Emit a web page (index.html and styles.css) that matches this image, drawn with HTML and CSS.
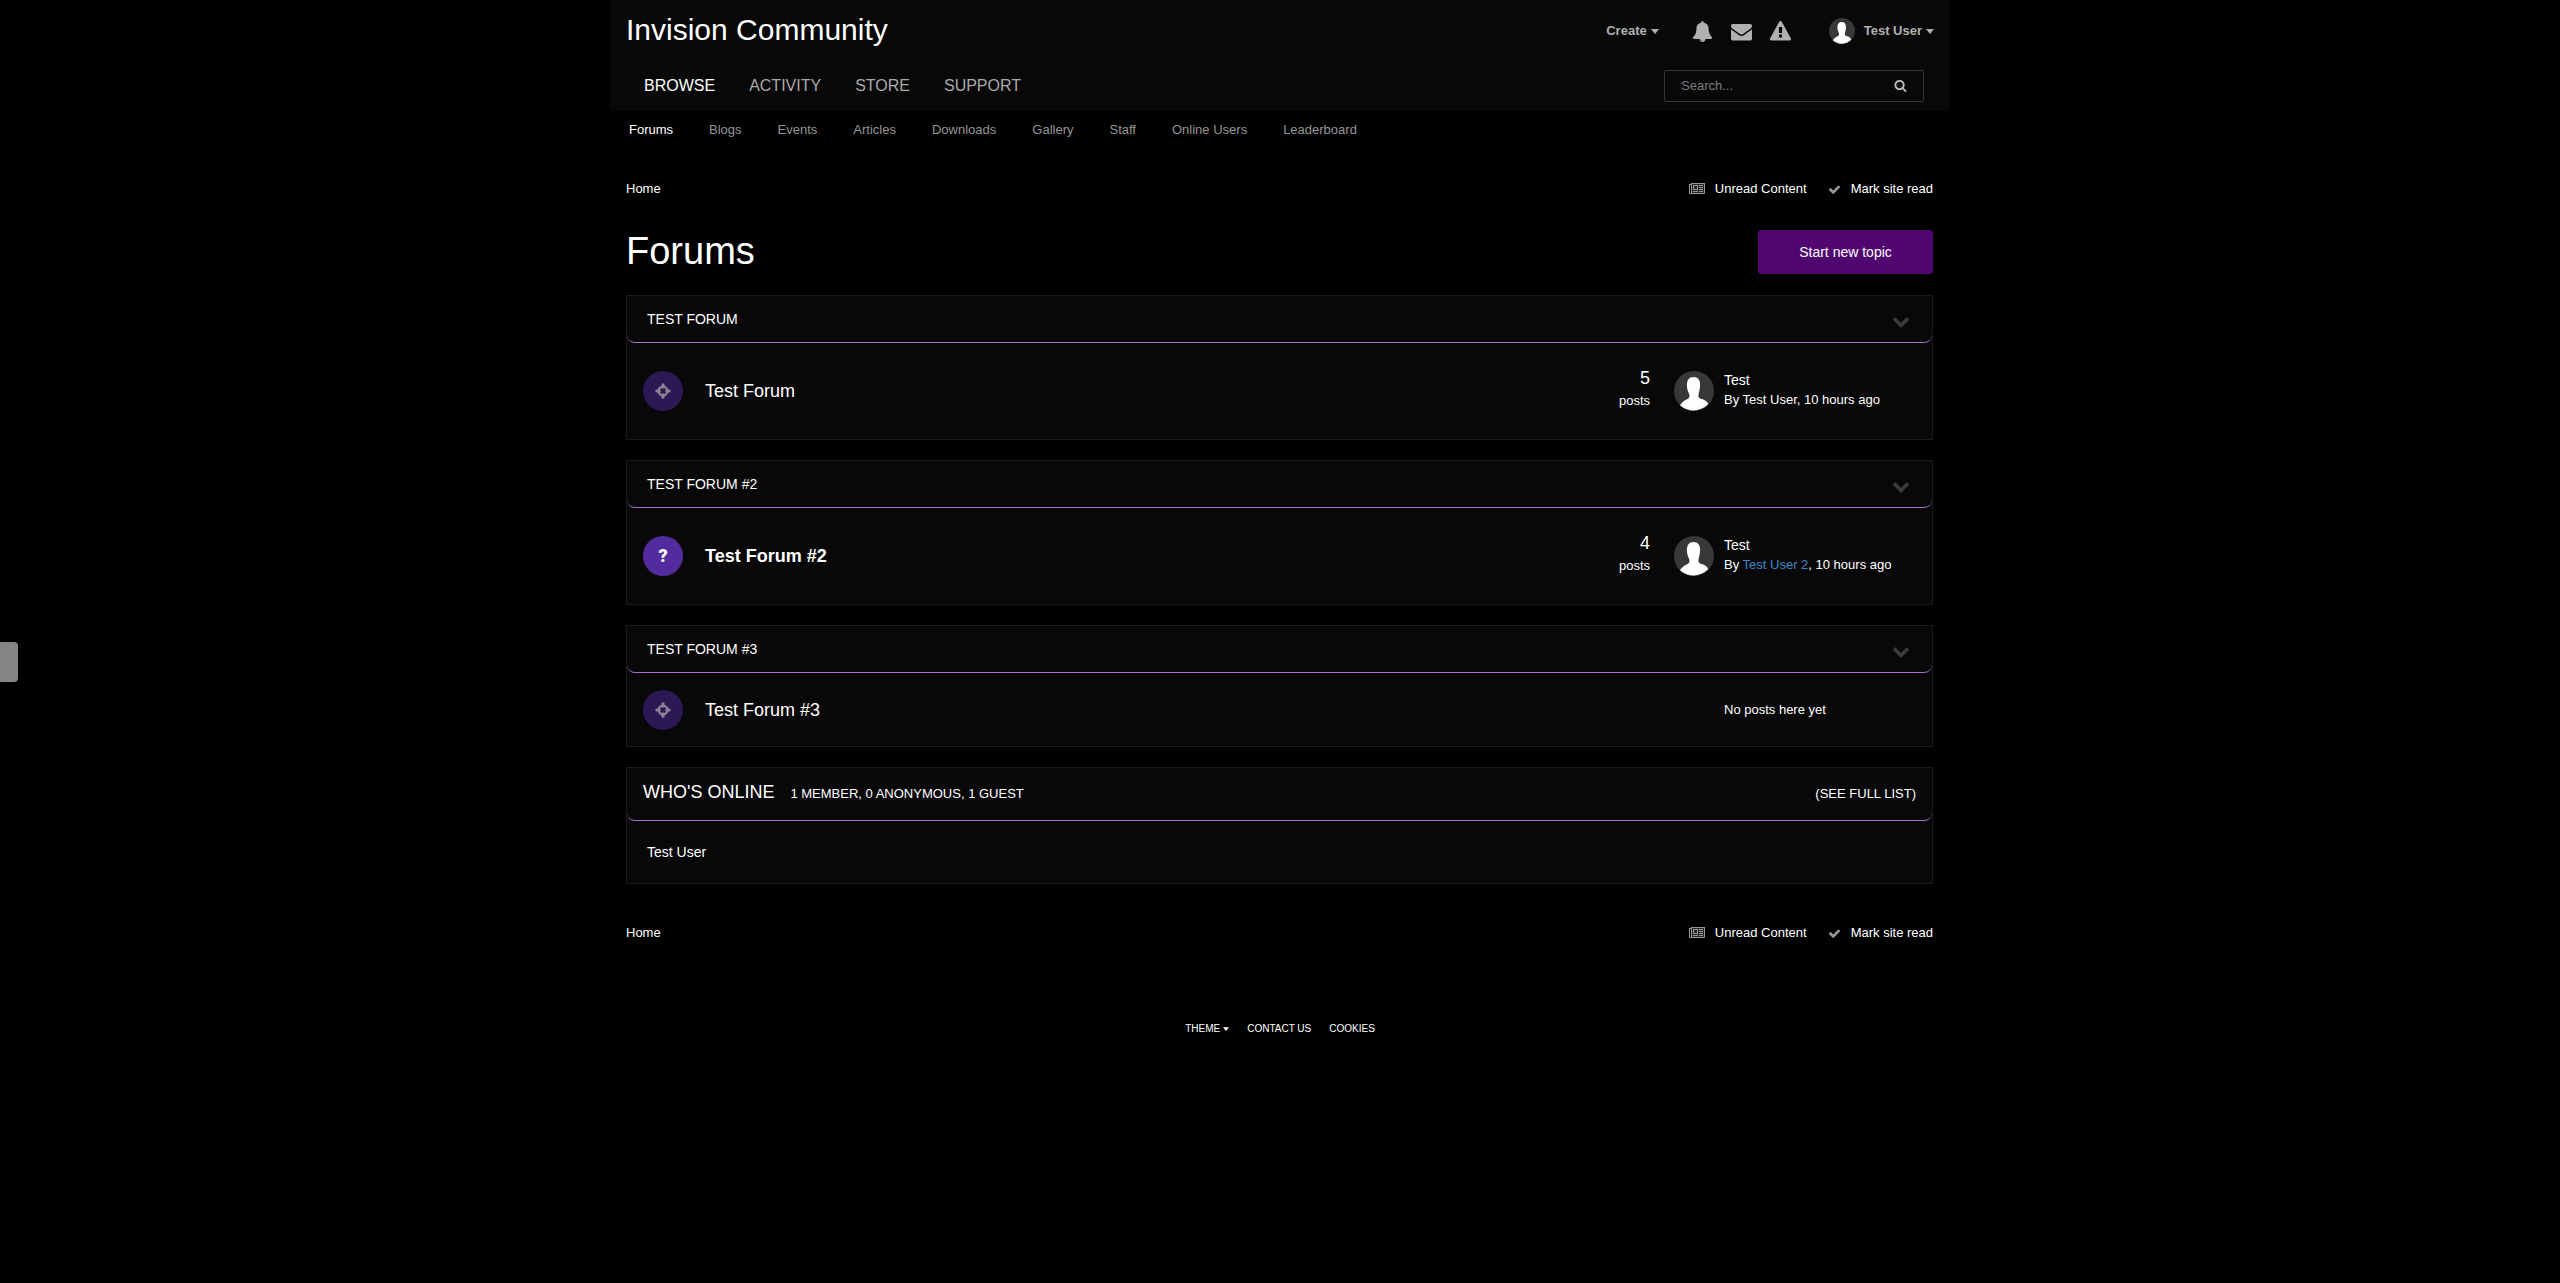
FILE: index.html
```html
<!DOCTYPE html>
<html lang="en">
<head>
    <meta charset="UTF-8">
    <meta name="viewport" content="width=device-width, initial-scale=1.0">
    <title>Forums - Invision Community</title>
    <link rel="stylesheet" href="styles.css">
</head>
<body>
    <!-- shared icons -->
    <svg class="sprite" aria-hidden="true">
        <symbol id="bell" viewBox="0 0 1792 1792"><path d="M912 1696q0-16-16-16-59 0-101.5-42.5t-42.5-101.5q0-16-16-16t-16 16q0 73 51.5 124.5t124.5 51.5q16 0 16-16zm816-288q0 52-38 90t-90 38h-448q0 106-75 181t-181 75-181-75-75-181h-448q-52 0-90-38t-38-90q50-42 91-88t85-119.5 74.5-158.5 50-206 19.5-260q0-152 117-282.5t307-158.5q-8-19-8-39 0-40 28-68t68-28 68 28 28 68q0 20-8 39 190 28 307 158.5t117 282.5q0 139 19.5 260t50 206 74.5 158.5 85 119.5 91 88z"/></symbol>
        <symbol id="envelope" viewBox="0 0 1792 1792"><path d="M1792 710v794q0 66-47 113t-113 47h-1472q-66 0-113-47t-47-113v-794q44 49 101 87 362 246 497 345 57 42 92.5 65.5t94.5 48 110 24.5h2q51 0 110-24.5t94.5-48 92.5-65.5q170-123 498-345 57-39 100-87zm0-294q0 79-49 151t-122 123q-376 261-468 325-10 7-42.5 31t-54 38.5-52 32.5-57.5 27-50 9h-2q-23 0-50-9t-57.5-27-52-32.5-54-38.5-42.5-31q-91-64-262-182.5t-205-142.5q-62-42-117-115.5t-55-136.5q0-78 41.5-130t118.5-52h1472q65 0 112.5 47t47.5 113z"/></symbol>
        <symbol id="warning" viewBox="0 0 1792 1792"><path d="M1024 1375v-190q0-14-9.5-23.5t-22.5-9.5h-192q-13 0-22.5 9.5t-9.5 23.5v190q0 14 9.5 23.5t22.5 9.5h192q13 0 22.5-9.5t9.5-23.5zm-2-374l18-459q0-12-10-19-13-11-24-11h-220q-11 0-24 11-10 7-10 21l17 457q0 10 10 16.5t24 6.5h185q14 0 23.5-6.5t10.5-16.5zm-14-934l768 1408q35 63-2 126-17 29-46.5 46t-63.5 17h-1536q-34 0-63.5-17t-46.5-46q-37-63-2-126l768-1408q17-31 47-49t65-18 65 18 47 49z"/></symbol>
        <symbol id="search" viewBox="0 0 1792 1792"><path d="M1216 832q0-185-131.5-316.5t-316.5-131.5-316.5 131.5-131.5 316.5 131.5 316.5 316.5 131.5 316.5-131.5 131.5-316.5zm512 832q0 52-38 90t-90 38q-54 0-90-38l-343-342q-179 124-399 124-143 0-273.5-55.5t-225-150-150-225-55.5-273.5 55.5-273.5 150-225 225-150 273.5-55.5 273.5 55.5 225 150 150 225 55.5 273.5q0 220-124 399l343 343q37 37 37 90z"/></symbol>
        <symbol id="check" viewBox="0 0 1792 1792"><path d="M1671 566q0 40-28 68l-724 724-136 136q-28 28-68 28t-68-28l-136-136-362-362q-28-28-28-68t28-68l136-136q28-28 68-28t68 28l294 295 656-657q28-28 68-28t68 28l136 136q28 28 28 68z"/></symbol>
        <symbol id="chevron" viewBox="0 0 1792 1792"><path d="M1683 808l-742 741q-19 19-45 19t-45-19l-742-741q-19-19-19-45.5t19-45.5l166-165q19-19 45-19t45 19l531 531 531-531q19-19 45-19t45 19l166 165q19 19 19 45.5t-19 45.5z"/></symbol>
        <symbol id="newspaper" viewBox="0 0 16 12"><path fill-rule="evenodd" d="M2 0h14v10q0 1-1 1H1q-1 0-1-1V1h2zM3 1v9h12V1zM1 2v8h1V2z"/><path fill-rule="evenodd" d="M4 2h5v5H4zM5 3v3h3V3zM10 2h4v1h-4zM10 4h4v1h-4zM10 6h4v1h-4zM4 8h5v1H4zM10 8h4v1h-4z"/><path opacity=".25" d="M3 1h12v9H3z"/></symbol>
        <symbol id="crosshair" viewBox="0 0 16 16"><circle cx="8" cy="8" r="4.400" fill="none" stroke="currentColor" stroke-width="2.300"/><path d="M8 .3q1.600 0 1.600 1.500v3.800H6.400V1.800Q6.400.3 8 .3zM8 15.700q1.600 0 1.600-1.500v-3.800H6.400v3.800q0 1.500 1.600 1.500zM.3 8q0-1.600 1.500-1.600h3.800v3.200H1.800Q.3 9.600.3 8zM15.700 8q0-1.600-1.500-1.600h-3.800v3.200h3.800q1.500 0 1.500-1.600z"/></symbol>
        <symbol id="caret" viewBox="0 0 8 5"><path d="M0 0h8L4 5z"/></symbol>
        <symbol id="person" viewBox="0 0 40 40"><circle cx="20" cy="20" r="20" fill="#383838"/><path fill="#fff" d="M19.500 6c4.500 0 6.700 3.200 6.600 8-.1 4-1 7-1.600 9.500-.3 2.500.3 3.700 2.200 4.300 4 1 6.200 2.400 7.500 5.200A20 20 0 0 1 6 34.200c1.500-2.500 4-4.700 7.500-6.200 1.700-.8 2.300-2 1.800-4.500C14 20.500 12.900 18 12.900 14c0-4.800 2.200-8 6.600-8z"/></symbol>
    </svg>

    <button class="side-tab" aria-label="Open panel"></button>

    <header class="header">
        <div class="top-bar">
            <a class="site-name" href="#">Invision Community</a>
            <div class="user-bar">
                <button class="user-link">Create <svg class="caret"><use href="#caret"/></svg></button>
                <div class="user-icons">
                    <button aria-label="Notifications"><svg><use href="#bell"/></svg></button>
                    <button aria-label="Messages"><svg><use href="#envelope"/></svg></button>
                    <button aria-label="Reports"><svg><use href="#warning"/></svg></button>
                </div>
                <button class="user-link"><svg class="avatar-small"><use href="#person"/></svg>Test User <svg class="caret"><use href="#caret"/></svg></button>
            </div>
        </div>
        <div class="nav-bar">
            <nav class="main-nav">
                <a class="active" href="#">BROWSE</a>
                <a href="#">ACTIVITY</a>
                <a href="#">STORE</a>
                <a href="#">SUPPORT</a>
            </nav>
            <form class="search">
                <input type="search" placeholder="Search..." aria-label="Search">
                <button type="button" aria-label="Search"><svg><use href="#search"/></svg></button>
            </form>
        </div>
    </header>

    <nav class="sub-nav">
        <a class="active" href="#">Forums</a>
        <a href="#">Blogs</a>
        <a href="#">Events</a>
        <a href="#">Articles</a>
        <a href="#">Downloads</a>
        <a href="#">Gallery</a>
        <a href="#">Staff</a>
        <a href="#">Online Users</a>
        <a href="#">Leaderboard</a>
    </nav>

    <main class="content">
        <div class="breadcrumb">
            <a href="#">Home</a>
            <div class="streams">
                <a href="#"><svg class="news"><use href="#newspaper"/></svg>Unread Content</a>
                <a href="#"><svg class="check"><use href="#check"/></svg>Mark site read</a>
            </div>
        </div>

        <div class="page-header">
            <h1>Forums</h1>
            <button class="new-topic">Start new topic</button>
        </div>

        <section class="box">
            <div class="box-title">
                <h2>TEST FORUM</h2>
                <button class="toggle" aria-label="Toggle category"><svg><use href="#chevron"/></svg></button>
            </div>
            <div class="forum-row">
                <span class="forum-icon read"><svg><use href="#crosshair"/></svg></span>
                <a class="forum-name" href="#">Test Forum</a>
                <div class="stats"><strong>5</strong><span>posts</span></div>
                <div class="last-post">
                    <svg class="avatar"><use href="#person"/></svg>
                    <div class="post-info">
                        <a class="post-title" href="#">Test</a>
                        <span>By <a href="#">Test User</a>, 10 hours ago</span>
                    </div>
                </div>
            </div>
        </section>

        <section class="box">
            <div class="box-title">
                <h2>TEST FORUM #2</h2>
                <button class="toggle" aria-label="Toggle category"><svg><use href="#chevron"/></svg></button>
            </div>
            <div class="forum-row">
                <span class="forum-icon">?</span>
                <a class="forum-name unread" href="#">Test Forum #2</a>
                <div class="stats"><strong>4</strong><span>posts</span></div>
                <div class="last-post">
                    <svg class="avatar"><use href="#person"/></svg>
                    <div class="post-info">
                        <a class="post-title" href="#">Test</a>
                        <span>By <a class="member" href="#">Test User 2</a>, 10 hours ago</span>
                    </div>
                </div>
            </div>
        </section>

        <section class="box">
            <div class="box-title">
                <h2>TEST FORUM #3</h2>
                <button class="toggle" aria-label="Toggle category"><svg><use href="#chevron"/></svg></button>
            </div>
            <div class="forum-row empty">
                <span class="forum-icon read"><svg><use href="#crosshair"/></svg></span>
                <a class="forum-name" href="#">Test Forum #3</a>
                <div class="last-post no-posts">No posts here yet</div>
            </div>
        </section>

        <section class="box">
            <div class="box-title online-title">
                <h2>WHO'S ONLINE</h2>
                <span>1 MEMBER, 0 ANONYMOUS, 1 GUEST</span>
                <a href="#">(SEE FULL LIST)</a>
            </div>
            <div class="online-list"><a href="#">Test User</a></div>
        </section>

        <div class="breadcrumb bottom">
            <a href="#">Home</a>
            <div class="streams">
                <a href="#"><svg class="news"><use href="#newspaper"/></svg>Unread Content</a>
                <a href="#"><svg class="check"><use href="#check"/></svg>Mark site read</a>
            </div>
        </div>
    </main>

    <footer class="footer">
        <button>THEME <svg class="caret"><use href="#caret"/></svg></button>
        <a href="#">CONTACT US</a>
        <a href="#">COOKIES</a>
    </footer>
</body>
</html>
```
FILE: styles.css
```css
* {
    box-sizing: border-box;
}
body {
    margin: 0;
    background: #000;
    color: #fff;
    font-family: "Liberation Sans", Arial, sans-serif;
    font-size: 13px;
    line-height: 20px;
}
a {
    color: inherit;
    text-decoration: none;
}
button {
    padding: 0;
    border: 0;
    background: none;
    color: inherit;
    font: inherit;
    cursor: pointer;
}
h1, h2 {
    margin: 0;
    font-weight: normal;
}
svg {
    display: block;
    fill: currentColor;
}
.sprite {
    position: absolute;
    width: 0;
    height: 0;
}
.caret {
    width: 8px;
    height: 5px;
}
.side-tab {
    position: fixed;
    top: 50%;
    left: 0;
    width: 18px;
    height: 40px;
    border-radius: 0 4px 4px 0;
    background: #858585;
}

/* header */
.header, .sub-nav, .content {
    max-width: 1340px;
    margin: 0 auto;
    padding: 0 16px;
}
.header {
    background: #080808;
}
.top-bar, .nav-bar {
    display: flex;
    justify-content: space-between;
    align-items: center;
}
.top-bar {
    height: 62px;
}
.nav-bar {
    height: 49px;
    padding: 0 10px 2px 18px;
}
.site-name {
    padding-bottom: 2px;
    font-size: 30px;
    line-height: 36px;
}
.user-bar {
    display: flex;
    align-items: center;
    gap: 33px;
    color: #b0b0b0;
}
.user-link {
    display: flex;
    align-items: center;
    gap: 4px;
    font-weight: bold;
}
.user-icons {
    display: flex;
    gap: 18px;
    margin-right: 5px;
}
.user-icons svg {
    width: 21px;
    height: 21px;
}
.avatar-small {
    width: 26px;
    height: 26px;
    margin-right: 5px;
}
.main-nav {
    display: flex;
    gap: 34px;
    color: #aaa;
    font-size: 16px;
}
.main-nav .active, .sub-nav .active {
    color: #fff;
}
.search {
    display: flex;
    align-items: center;
    width: 260px;
    height: 32px;
    padding: 0 16px;
    border: 1px solid #363636;
    border-radius: 2px;
}
.search input {
    flex: 1;
    min-width: 0;
    padding: 0;
    border: 0;
    outline: 0;
    background: none;
    color: #fff;
    font: inherit;
}
.search input::placeholder {
    color: #7d7d7d;
}
.search svg {
    width: 13px;
    height: 13px;
    color: #bbb;
}
.sub-nav {
    display: flex;
    gap: 36px;
    padding: 9px 19px;
    color: #959595;
}

/* page */
.content {
    padding-right: 17px;
}
.breadcrumb {
    display: flex;
    justify-content: space-between;
    padding: 30px 0 31px;
}
.breadcrumb.bottom {
    padding: 19px 0;
}
.streams, .streams a {
    display: flex;
    align-items: center;
}
.streams {
    gap: 21px;
}
.streams a {
    gap: 10px;
}
.streams svg {
    color: #999;
}
.news {
    width: 16px;
    height: 12px;
}
.check {
    width: 13px;
    height: 13px;
}
.page-header {
    display: flex;
    justify-content: space-between;
    align-items: center;
    margin-bottom: 21px;
}
h1 {
    padding-bottom: 2px;
    font-size: 38px;
    line-height: 42px;
}
.new-topic {
    width: 175px;
    height: 44px;
    border-radius: 3px;
    background: #50066f;
    font-size: 14px;
}

/* forum boxes */
.box {
    margin-bottom: 20px;
    border: 1px solid #1a1a1a;
    background: #080808;
}
.box-title {
    display: flex;
    justify-content: space-between;
    align-items: center;
    height: 47px;
    padding: 0 22px 0 20px;
    border-bottom: 1px solid #ab6ccf;
    border-radius: 0 0 8px 8px;
}
.box-title h2 {
    font-size: 14px;
}
.toggle {
    padding-top: 4px;
    color: #3c3c3c;
}
.toggle svg {
    width: 18px;
    height: 18px;
}
.forum-row {
    display: flex;
    align-items: center;
    height: 96px;
    padding: 0 16px;
}
.forum-row.empty {
    height: 73px;
}
.forum-icon {
    display: flex;
    justify-content: center;
    align-items: center;
    width: 40px;
    height: 40px;
    margin-right: 22px;
    border-radius: 50%;
    background: #522b9e;
    font-family: Roboto, sans-serif;
    font-size: 18px;
    font-weight: 900;
}
.forum-icon.read {
    background: #2b1854;
    color: #8c8496;
}
.forum-icon svg {
    width: 16px;
    height: 16px;
}
.forum-name {
    flex: 1;
    font-size: 18px;
}
.forum-name.unread {
    font-weight: bold;
}
.stats {
    display: flex;
    flex-direction: column;
    gap: 3px;
    margin-right: 24px;
    padding-bottom: 4px;
    text-align: right;
}
.stats strong {
    font-size: 18px;
    font-weight: normal;
}
.last-post {
    display: flex;
    align-items: center;
    gap: 10px;
    width: 242px;
}
.last-post.no-posts {
    padding-left: 50px;
}
.avatar {
    width: 40px;
    height: 40px;
}
.post-info {
    display: flex;
    flex-direction: column;
    padding-bottom: 2px;
    line-height: 19px;
}
.post-title {
    font-size: 14px;
}
.member {
    color: #3d87c7;
}

/* who's online */
.online-title {
    justify-content: flex-start;
    align-items: baseline;
    gap: 16px;
    height: 53px;
    padding: 14px 16px;
}
.online-title h2 {
    font-size: 18px;
}
.online-title a {
    margin-left: auto;
}
.online-list {
    padding: 21px 20px;
    font-size: 14px;
}

/* footer */
.footer {
    display: flex;
    justify-content: center;
    gap: 18px;
    padding: 57px 0;
    font-size: 10px;
}
.footer button {
    display: flex;
    align-items: center;
    gap: 3px;
}
.footer .caret {
    width: 6px;
    height: 4px;
}
```
